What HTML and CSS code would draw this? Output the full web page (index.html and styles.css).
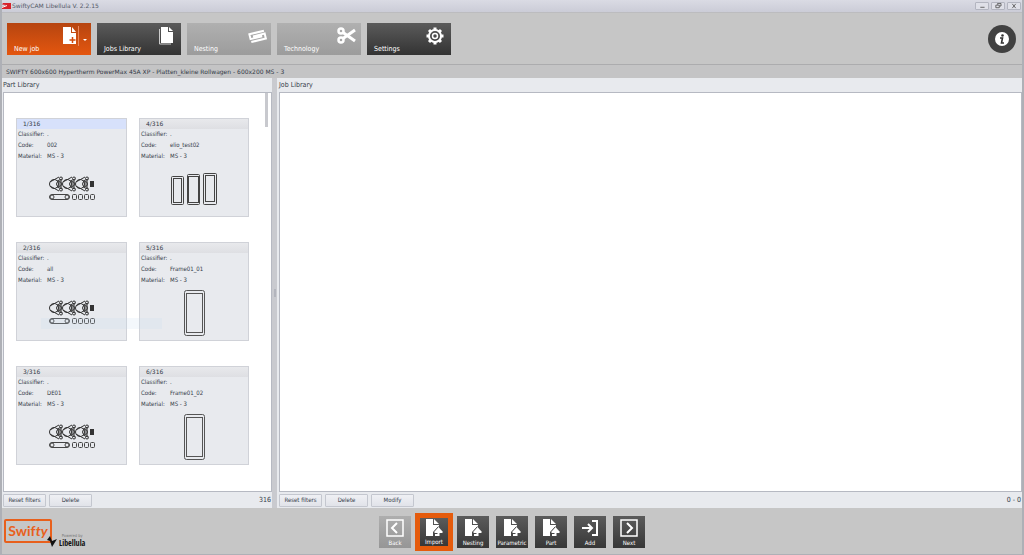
FILE: index.html
```html
<!DOCTYPE html>
<html lang="en">
<head>
<meta charset="utf-8">
<title>SwiftyCAM Libellula</title>
<link rel="stylesheet" href="styles.css">
</head>
<body>
<svg class="defs" aria-hidden="true">
<symbol id="file-up" viewBox="0 0 18 18">
<path fill="#fff" d="M1 0h7v6h6v2l-5 5v4H1z M9 0l5 5H9z"/>
<path fill="none" stroke="#fff" stroke-width="2" d="M10 16h3.500v-5"/>
<path fill="#fff" d="M13.500 8l4 4.500v1.500h-8v-1.500z"/>
<path fill="none" stroke="#484848" d="M8.500 17v-4l5-5.500"/>
</symbol>
<symbol id="parts" viewBox="0 0 46 26">
<g id="bracket" fill="none" stroke="#333" stroke-width="1">
<circle cx="5" cy="8" r="4.500"/>
<path d="M1 6L10 1M1 10l9 5M8 5l5-2M8 11l5 2"/>
<circle cx="12" cy="2.500" r="1.500"/><circle cx="12" cy="13.500" r="1.500"/>
<circle cx="10" cy="8" r="2.500"/><path d="M10 6v4M12 4v8"/>
</g>
<use href="#bracket" x="13"/>
<use href="#bracket" x="26"/>
<path fill="#333" d="M41 5h4v6h-4z"/>
<g fill="none" stroke="#444">
<rect x=".5" y="18.500" width="20" height="5" rx="2.500"/>
<circle cx="3" cy="21" r="2"/><circle cx="18" cy="21" r="2"/>
<rect x="23.500" y="18.500" width="4" height="5" rx="1"/>
<rect x="29.500" y="18.500" width="4" height="5" rx="1"/>
<rect x="35.500" y="18.500" width="4" height="5" rx="1"/>
<rect x="41.500" y="18.500" width="4" height="5" rx="1"/>
</g>
</symbol>
<symbol id="frame" viewBox="0 0 21 46">
<g fill="none" stroke="#555">
<rect x=".5" y=".5" width="20" height="45" rx="2"/>
<rect x="2.500" y="3.500" width="16" height="39"/>
</g>
</symbol>
</svg>

<header class="titlebar">
<svg class="app-icon" viewBox="0 0 9 7"><path fill="#d8222a" d="M1 0h8v6H0V4l4-2-4-.500z"/><path stroke="#fff" fill="none" d="M0 4.500l5-2"/></svg>
<span class="title">SwiftyCAM Libellula V. 2.2.15</span>
<div class="window-buttons">
<button aria-label="Minimize"><svg viewBox="0 0 14 7"><path d="M5 5h5"/></svg></button>
<button aria-label="Restore"><svg viewBox="0 0 14 7"><path d="M4.500 2.500h4v3h-4zM6.500 2V.5h4v3H9"/></svg></button>
<button aria-label="Close"><svg viewBox="0 0 14 7"><path d="M5 1l4 5M9 1L5 6"/></svg></button>
</div>
</header>

<nav class="toolbar">
<button class="tile active">
<svg viewBox="0 0 32 20"><path fill="#fff" d="M4 1h8v6h5v11H4zM13 1l4 5h-4z"/><path stroke="#d14a0c" stroke-width="1.500" d="M13.500 11v6M10.500 14h6"/><path stroke="#e8875c" d="M19.500 0v20"/><path fill="#fff" d="M24 13h4l-2 2z"/></svg>
<span>New job</span></button>
<button class="tile">
<svg viewBox="0 0 32 20"><path fill="#fff" d="M12 1h7v5h5v11H12zM20 1l4 4h-4z"/><path fill="none" stroke="#ccc" d="M10.500 3v15H22"/></svg>
<span>Jobs Library</span></button>
<button class="tile" disabled>
<svg viewBox="0 0 32 20"><g transform="rotate(-14 18 10)"><path fill="none" stroke="#fff" stroke-width="2" d="M23 11.500H11v-5h15M11 14.500h15v-5H14"/></g></svg>
<span>Nesting</span></button>
<button class="tile" disabled>
<svg viewBox="0 0 32 20"><g fill="none" stroke="#fff" stroke-width="2.500"><circle cx="12" cy="5" r="2.500"/><circle cx="12" cy="14" r="2.500"/><path stroke-width="3" d="M14 6.500l12 8.500M14 12.500L26 4"/></g></svg>
<span>Technology</span></button>
<button class="tile">
<svg viewBox="0 0 32 20"><g fill="none" stroke="#fff"><circle cx="16" cy="10" r="6" stroke-width="2"/><circle cx="16" cy="10" r="2.500" stroke-width="1.500"/><path stroke-width="3" d="M16 4V1.500M16 16v2.500M10 10H7.500M22 10h2.500M12 6l-2-2M20 6l2-2M12 14l-2 2M20 14l2 2"/></g></svg>
<span>Settings</span></button>
<button class="info" aria-label="Info"><svg viewBox="0 0 28 28"><circle cx="14" cy="14" r="14" fill="#414141"/><circle cx="14" cy="14" r="7" fill="#fff"/><circle cx="14.500" cy="10.500" r="1.300" fill="#333"/><path fill="none" stroke="#333" stroke-width="1.600" d="M12 13h2.500l-1 5H16"/></svg></button>
</nav>

<div class="machine">SWIFTY 600x600 Hypertherm PowerMax 45A XP - Platten_kleine Rollwagen - 600x200 MS - 3</div>

<main class="panels">
<section class="panel parts-panel">
<h2>Part Library</h2>
<div class="list">
<div class="cards">
<article class="card selected">
<h3>1/316</h3>
<dl><dt>Classifier:</dt><dd>.</dd><dt>Code:</dt><dd>002</dd><dt>Material:</dt><dd>MS - 3</dd></dl>
<div class="preview"><svg class="parts"><use href="#parts"/></svg></div>
</article>
<article class="card">
<h3>4/316</h3>
<dl><dt>Classifier:</dt><dd>.</dd><dt>Code:</dt><dd>elio_test02</dd><dt>Material:</dt><dd>MS - 3</dd></dl>
<div class="preview"><svg class="frames" viewBox="0 0 46 32"><g fill="none" stroke="#444"><rect x=".5" y="3.500" width="12" height="28" rx="1"/><rect x="2.500" y="5.500" width="8" height="24"/><rect x="16.500" y="1.500" width="12" height="30" rx="1"/><rect x="17.500" y="3.500" width="10" height="26"/><rect x="32.500" y=".5" width="13" height="31" rx="1"/><rect x="34.500" y="2.500" width="9" height="26"/></g></svg></div>
</article>
<article class="card">
<h3>2/316</h3>
<dl><dt>Classifier:</dt><dd>.</dd><dt>Code:</dt><dd>all</dd><dt>Material:</dt><dd>MS - 3</dd></dl>
<div class="preview"><svg class="parts"><use href="#parts"/></svg></div>
<div class="drag-ghost"></div>
</article>
<article class="card">
<h3>5/316</h3>
<dl><dt>Classifier:</dt><dd>.</dd><dt>Code:</dt><dd>Frame01_01</dd><dt>Material:</dt><dd>MS - 3</dd></dl>
<div class="preview"><svg class="frame"><use href="#frame"/></svg></div>
</article>
<article class="card">
<h3>3/316</h3>
<dl><dt>Classifier:</dt><dd>.</dd><dt>Code:</dt><dd>DE01</dd><dt>Material:</dt><dd>MS - 3</dd></dl>
<div class="preview"><svg class="parts"><use href="#parts"/></svg></div>
</article>
<article class="card">
<h3>6/316</h3>
<dl><dt>Classifier:</dt><dd>.</dd><dt>Code:</dt><dd>Frame01_02</dd><dt>Material:</dt><dd>MS - 3</dd></dl>
<div class="preview"><svg class="frame"><use href="#frame"/></svg></div>
</article>
</div>
<div class="scrollbar"></div>
</div>
<div class="actions"><button>Reset filters</button><button>Delete</button><span class="count">316</span></div>
</section>
<div class="splitter"></div>
<section class="panel jobs-panel">
<h2>Job Library</h2>
<div class="list"></div>
<div class="actions"><button>Reset filters</button><button>Delete</button><button>Modify</button><span class="count">0 - 0</span></div>
</section>
</main>

<footer class="footer">
<div class="brand">
<div class="swifty">Swif<i>ty</i></div>
<svg class="bird" viewBox="0 0 10 11"><path fill="#111" d="M0 4l3-4 2 5 5-2-5 8-2-6z"/></svg>
<div class="libellula"><small>Powered by</small><b>Libellula</b></div>
</div>
<div class="steps">
<button disabled><svg viewBox="0 0 18 18"><path fill="none" stroke="#fff" stroke-width="1.500" d="M1 1h16v16H1z"/><path fill="none" stroke="#fff" stroke-width="2" d="M11 4L6 9l5 5"/></svg><span>Back</span></button>
<button class="current"><svg><use href="#file-up"/></svg><span>Import</span></button>
<button><svg><use href="#file-up"/></svg><span>Nesting</span></button>
<button><svg><use href="#file-up"/></svg><span>Parametric</span></button>
<button><svg><use href="#file-up"/></svg><span>Part</span></button>
<button><svg viewBox="0 0 18 18"><path fill="none" stroke="#fff" stroke-width="2" d="M11 2h5v14h-5M1 9h10M7 5l4 4-4 4"/></svg><span>Add</span></button>
<button><svg viewBox="0 0 18 18"><path fill="none" stroke="#fff" stroke-width="1.500" d="M1 1h16v16H1z"/><path fill="none" stroke="#fff" stroke-width="2" d="M7 4l5 5-5 5"/></svg><span>Next</span></button>
</div>
</footer>
</body>
</html>
```
FILE: styles.css
```css
* { box-sizing: border-box; }
body {
	margin: 0; min-height: 100vh;
	display: flex; flex-direction: column;
	background: #c6c6c6; color: #333a48;
	font: 7px/10px Tahoma, "DejaVu Sans Condensed", "DejaVu Sans", sans-serif;
	border: solid #aeb0b6; border-width: 0 2px 2px 2px;
}
button { font: inherit; color: inherit; margin: 0; padding: 0; border: 0; }
h2, h3, dl, dd { margin: 0; font-weight: normal; font-size: inherit; }
svg { display: block; }
.defs { position: absolute; width: 0; height: 0; }

.titlebar {
	display: flex; align-items: center; height: 13px; padding-right: 1px;
	background: linear-gradient(#dadbe4, #cbccd7);
	border-bottom: 1px solid #bcbcbf;
}
.app-icon { width: 9px; height: 7px; }
.title { flex: 1; padding-left: 1px; color: #555a68; }
.title, .machine, .card h3 { font-family: "DejaVu Sans", sans-serif; font-size: 6px; }
.window-buttons { display: flex; gap: 2px; }
.window-buttons button { width: 14px; height: 8px; border: 1px solid #b3b5c0; border-radius: 1px; background: #dfe0e8; }
.window-buttons svg { width: 12px; height: 6px; fill: none; stroke: #555; }

.toolbar {
	display: flex; align-items: center; gap: 6px;
	height: 52px; padding: 0 6px 0 5px;
	border-bottom: 1px solid #acacae;
}
.tile {
	display: flex; flex-direction: column; justify-content: space-between;
	width: 84px; height: 32px; padding: 3px 0 1px 7px;
	color: #fff; text-align: left;
	background: linear-gradient(#5b5b5b, #333);
}
.tile svg { width: 32px; height: 20px; align-self: flex-end; flex: none; }
.tile span { margin-top: -2px; }
.tile.active { background: linear-gradient(#b64510, #e4560f); }
.tile:disabled { background: linear-gradient(#b0b0b0, #9c9c9c); }
.info { width: 28px; height: 28px; margin-left: auto; background: none; }

.machine { height: 13px; padding: 2px 4px; background: #c4c4c5; white-space: nowrap; }

.panels { flex: 1; display: flex; background: #e8eaee; }
.panel { display: flex; flex-direction: column; }
.panel h2 { height: 14px; padding: 2px 0; }
.parts-panel { width: 270px; padding-left: 1px; }
.jobs-panel { flex: 1; padding-left: 2px; }
.splitter {
	width: 5px; display: flex; align-items: center; justify-content: center;
	background: #c9cacf;
}
.splitter::before { content: ""; width: 2px; height: 8px; background: #b3b5bd; }
.list {
	flex: 1; display: flex; justify-content: space-between;
	background: #fff; border: 1px solid #b6b9c2;
}
.cards {
	display: grid; grid-template-columns: 111px 110px; grid-auto-rows: 99px;
	gap: 25px 12px; padding: 25px 0 26px 12px; align-content: start;
}
.card { position: relative; display: flex; flex-direction: column; background: #e8eaee; border: 1px solid #d0d2d8; }
.card h3 { height: 10px; padding-left: 6px; background: linear-gradient(#e8e9ec, #dedfe3); }
.card.selected h3 { background: #d7e1fb; }
.card dl { display: grid; grid-template-columns: 29px 1fr; line-height: 11px; margin-top: -1px; padding-left: 1px; font-size: 6px; }
.preview { flex: 1; display: flex; justify-content: center; align-items: center; }
.parts { width: 46px; height: 26px; }
.frames { width: 46px; height: 32px; }
.frame { width: 21px; height: 46px; }
.drag-ghost { position: absolute; left: 24px; top: 75px; width: 121px; height: 11px; background: rgba(200, 218, 238, .2); z-index: 1; }
.scrollbar { width: 3px; height: 34px; margin-right: 3px; background: #c8c9ce; }
.actions { display: flex; align-items: center; gap: 3px; height: 16px; }
.actions button {
	width: 43px; height: 13px; font-size: 6px;
	background: linear-gradient(#eff0f4, #e1e3e9);
	border: 1px solid #c4c7cf; border-radius: 1px;
}
.count { margin-left: auto; padding-right: 1px; }

.footer { display: grid; grid-template-columns: 1fr auto 1fr; align-items: center; height: 46px; padding-top: 2px; }
.brand { display: flex; align-items: flex-end; padding: 0 0 2px 2px; }
.swifty {
	width: 48px; height: 24px; border: 2px solid #e8601c; border-radius: 2px;
	color: #e8601c; font: bold 14px/19px Lato, sans-serif; text-align: center;
}
.bird { width: 10px; height: 11px; margin: 0 2px -4px -5px; }
.libellula { display: flex; flex-direction: column; margin-bottom: -4px; color: #111; }
.libellula small { font-size: 4px; line-height: 4px; color: #777; text-align: center; }
.libellula b { font: bold 8px/9px "Liberation Sans Narrow", "Open Sans Condensed", "DejaVu Sans Condensed", sans-serif; }
.steps { display: flex; gap: 7px; }
.steps button {
	display: flex; flex-direction: column; align-items: center; justify-content: space-between;
	width: 32px; height: 32px; padding: 3px 0 1px;
	color: #fff; font-size: 6px; line-height: 8px;
	background: linear-gradient(#5b5b5b, #373737);
}
.steps button:disabled { background: linear-gradient(#aeaeae, #969696); }
.steps svg { width: 18px; height: 18px; flex: none; }
.steps .current { outline: 3px solid #e55b0c; border: solid #e55b0c; border-width: 2px; padding: 1px 0 0; }
```
